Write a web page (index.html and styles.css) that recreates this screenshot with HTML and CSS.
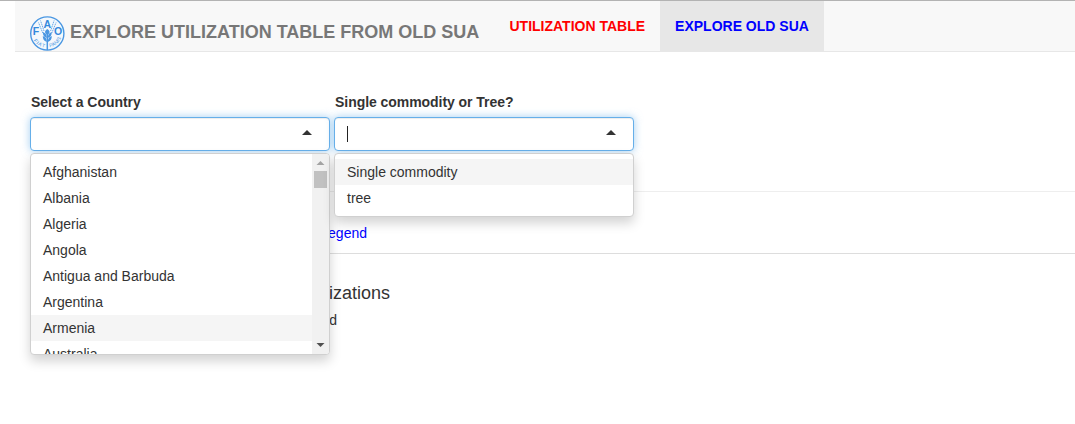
FILE: index.html
```html
<!DOCTYPE html>
<html lang="en">
<head>
<meta charset="utf-8">
<title>Explore utilization table from old SUA</title>
<link rel="stylesheet" href="styles.css">
</head>
<body>
<nav class="navbar">
  <div class="brand">
    <svg class="logo" viewBox="0 0 36 36" fill="none" stroke="#4a97e2">
      <circle cx="18.300" cy="17.500" r="16.600" fill="#f4f8fc" stroke-width="1.400"/>
      <path d="M18.300 34V15" stroke-width="1.500"/>
      <path d="M18.300 19c-3-2-3-4 0-6 3 2 3 4 0 6zM17.800 22c-3-1-4-3-4-6 3 1 4 3 4 6zM18.800 22c3-1 4-3 4-6-3 1-4 3-4 6zM17.800 26c-3-1-4-3-4-6 3 1 4 3 4 6zM18.800 26c3-1 4-3 4-6-3 1-4 3-4 6z" fill="#4a97e2" stroke="none"/>
      <path d="M13.800 17L9.500 6.500M15 15L11.500 4.500M22.800 17L27.100 6.500M21.600 15L25.100 4.500" stroke-width=".8" stroke-dasharray="1.500 .6"/>
      <g class="logo-letters" fill="#3489dc" stroke="none" text-anchor="middle">
        <text x="7" y="19.200">F</text>
        <text x="18.300" y="11.600">A</text>
        <text x="29.200" y="19.200">O</text>
      </g>
      <g class="logo-motto" fill="#4a97e2" stroke="none">
        <text transform="translate(4.500 24.500) rotate(55)">F</text>
        <text transform="translate(7 27.500) rotate(43)">I</text>
        <text transform="translate(8.800 28.800) rotate(32)">A</text>
        <text transform="translate(12.500 30.700) rotate(18)">T</text>
        <text transform="translate(20.700 31.300) rotate(-15)">P</text>
        <text transform="translate(23.800 30.400) rotate(-27)">A</text>
        <text transform="translate(26.700 28.800) rotate(-38)">N</text>
        <text transform="translate(29.400 26.300) rotate(-50)">I</text>
        <text transform="translate(30.500 25) rotate(-58)">S</text>
      </g>
    </svg>
    <span class="brand-title">EXPLORE UTILIZATION TABLE FROM OLD SUA</span>
  </div>
  <a class="tab">UTILIZATION TABLE</a>
  <a class="tab active">EXPLORE OLD SUA</a>
</nav>
<main class="content">
  <div class="filters">
    <div class="field">
      <label class="field-label">Select a Country</label>
      <div class="select"><i class="caret"></i></div>
      <div class="menu menu-countries">
        <div class="options">
          <div class="option">Afghanistan</div>
          <div class="option">Albania</div>
          <div class="option">Algeria</div>
          <div class="option">Angola</div>
          <div class="option">Antigua and Barbuda</div>
          <div class="option">Argentina</div>
          <div class="option highlighted">Armenia</div>
          <div class="option">Australia</div>
        </div>
        <div class="scrollbar">
          <svg class="arrow" viewBox="0 0 17 17"><path d="M4.500 11h8L8.500 7z" fill="#a3a3a3"/></svg>
          <div class="thumb"></div>
          <svg class="arrow arrow-down" viewBox="0 0 17 17"><path d="M4.500 6h8L8.500 10z" fill="#505050"/></svg>
        </div>
      </div>
    </div>
    <div class="field">
      <label class="field-label">Single commodity or Tree?</label>
      <div class="select"><span class="cursor"></span><i class="caret"></i></div>
      <div class="menu">
        <div class="options">
          <div class="option highlighted">Single commodity</div>
          <div class="option">tree</div>
        </div>
      </div>
    </div>
  </div>
  <hr class="rule">
  <div class="legend"><a class="legend-link">Legend</a></div>
  <section class="panel">
    <h4 class="panel-title">Utilizations</h4>
    <p class="panel-text">d</p>
  </section>
</main>
</body>
</html>
```
FILE: styles.css
```css
* { box-sizing: border-box; }
body {
  margin: 0;
  height: 424px;
  overflow: hidden;
  border-top: 1px solid #b3b3b3;
  background: #fff;
  color: #333;
  font: 14px/20px "Liberation Sans", Arial, sans-serif;
}
.navbar {
  display: flex;
  height: 51px;
  margin-left: 15px;
  background: #f8f8f8;
  border-bottom: 1px solid #e7e7e7;
}
.brand {
  display: flex;
  width: 479.5px;
  padding: 15px 0 0 14px;
}
.logo { width: 36px; height: 36px; flex: none; }
.logo-letters { font: bold 10.5px "Liberation Sans", Arial, sans-serif; }
.logo-motto { font: 5px "Liberation Sans", Arial, sans-serif; }
.brand-title {
  padding: 6px 0 0 5px;
  color: #777;
  font-size: 18px;
  font-weight: bold;
  white-space: nowrap;
}
.tab {
  height: 50px;
  padding: 15px 15px 0;
  color: #f00;
  font-weight: bold;
  white-space: nowrap;
}
.tab.active { width: 164px; color: #00f; background: #e7e7e7; }
.content { padding: 40px 0 0 30px; }
.filters { display: flex; gap: 4px; height: 99px; }
.field { position: relative; width: 300px; }
.field-label { display: block; height: 25px; padding-left: 1px; font-weight: bold; letter-spacing: -.05px; }
.select {
  display: flex;
  align-items: center;
  height: 34px;
  padding: 0 17px 0 12px;
  border: 1px solid #66afe9;
  border-radius: 4px;
  background: #fff;
  box-shadow: inset 0 1px 1px rgba(0,0,0,.075), 0 0 8px rgba(102,175,233,.6);
}
.cursor { width: 1px; height: 16px; background: #222; }
.caret {
  margin: -3px 0 0 auto;
  border: 5px solid transparent;
  border-top: 0;
  border-bottom-color: #333;
}
.menu {
  position: absolute;
  z-index: 2;
  top: 61px;
  left: 0;
  display: flex;
  width: 300px;
  height: 64px;
  overflow: hidden;
  border: 1px solid #d0d0d0;
  border-radius: 4px;
  background: #fff;
  box-shadow: 0 6px 12px rgba(0,0,0,.175);
}
.menu-countries { height: 202px; }
.options { flex: 1; padding-top: 5px; }
.option { height: 26px; padding: 3px 12px; }
.option.highlighted { background: #f5f5f5; }
.scrollbar {
  display: flex;
  flex-direction: column;
  align-items: center;
  width: 17px;
  background: #f1f1f1;
}
.arrow { width: 17px; height: 17px; flex: none; }
.thumb { width: 13px; height: 17px; background: #c1c1c1; }
.arrow-down { margin-top: auto; }
.rule { margin: 0; border: 0; border-top: 1px solid #eee; }
.legend {
  height: 62px;
  padding: 31px 0 0;
  border-bottom: 1px solid #ddd;
}
.legend-link { display: block; width: 337px; text-align: right; color: #00f; }
.panel { padding-top: 29px; }
.panel-title { width: 360px; margin: 0; text-align: right; font-size: 18px; font-weight: normal; }
.panel-text { width: 307px; margin: 7px 0 0; text-align: right; }
```
